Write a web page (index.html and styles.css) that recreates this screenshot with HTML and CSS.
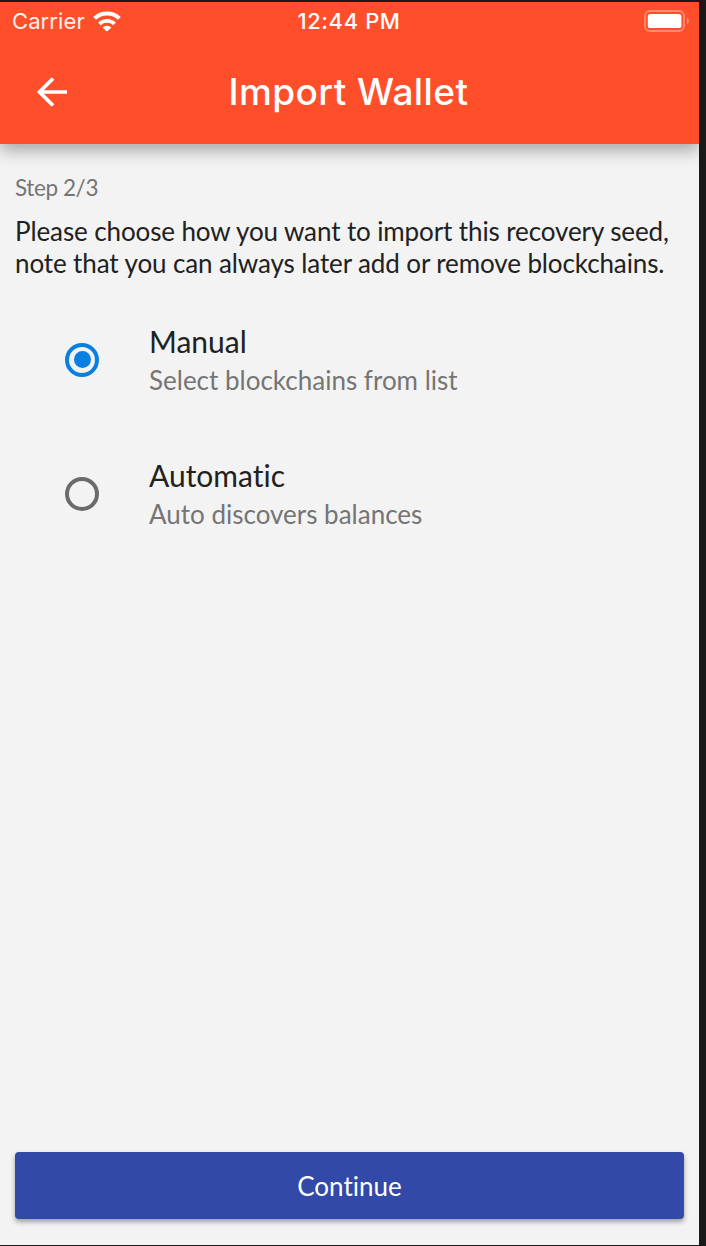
FILE: index.html
```html
<!DOCTYPE html>
<html lang="en">
<head>
  <meta charset="UTF-8">
  <title>Import Wallet</title>
  <meta name="viewport" content="width=device-width, initial-scale=1.0">

  <link rel="stylesheet" href="styles.css">
</head>
<body>

  <div class="screen">

    <header class="header">
      <div class="status-bar">
        <div class="carrier">
          <span class="carrier-name">Carrier</span>
          <svg class="wifi" width="28" height="21" viewBox="0 0 28 21">
            <path d="M14 20.6 L9.6 16.4 A6.2 5.4 0 0 1 18.4 16.4 Z" fill="#fff"/>
            <path d="M6.4 12.9 A10.8 10.4 0 0 1 21.6 12.9" fill="none" stroke="#fff" stroke-width="3.8"/>
            <path d="M1.6 7.4 A17.8 17.4 0 0 1 26.4 7.4" fill="none" stroke="#fff" stroke-width="4"/>
          </svg>
        </div>
        <span class="time">12:44 PM</span>
        <svg class="battery" width="46" height="22" viewBox="0 0 46 22">
          <rect x="1" y="1" width="39" height="20" rx="5" fill="none" stroke="#fff" stroke-opacity=".35" stroke-width="1.8"/>
          <rect x="3.8" y="4" width="33.6" height="14" rx="2.6" fill="#fff"/>
          <path d="M43 7.4 Q44.8 8.6 44.8 11 T43 14.6 Z" fill="#fff" fill-opacity=".45"/>
        </svg>
      </div>

      <div class="nav-bar">
        <button class="back-btn" aria-label="Back">
          <svg width="32" height="32" viewBox="0 0 32 32">
            <path d="M31 16 H3.5 M17 2.5 L3.5 16 L17 29.5" fill="none" stroke="#fff" stroke-width="3.7"/>
          </svg>
        </button>
        <h1>Import Wallet</h1>
      </div>
    </header>

    <main class="content">
      <p class="step">Step 2/3</p>
      <p class="intro">Please choose how you want to import this recovery seed,<br>note that you can always later add or remove blockchains.</p>

      <div class="options">
        <label class="option">
          <input type="radio" name="import-mode" checked>
          <span class="option-text">
            <span class="option-title">Manual</span>
            <span class="option-info">Select blockchains from list</span>
          </span>
        </label>

        <label class="option">
          <input type="radio" name="import-mode">
          <span class="option-text">
            <span class="option-title">Automatic</span>
            <span class="option-info">Auto discovers balances</span>
          </span>
        </label>
      </div>
    </main>

    <footer class="footer">
      <button class="continue-btn">Continue</button>
    </footer>

  </div>

</body>
</html>
```
FILE: styles.css
```css
* {
  box-sizing: border-box;
}

body {
  margin: 0;
  height: 1246px;
  padding: 2px 7px 1px 0;
  background-color: #191919;
  font-family: Lato, sans-serif;
  font-variant-ligatures: none;
  color: #212121;
}

h1, p {
  margin: 0;
}

.screen {
  display: flex;
  flex-direction: column;
  height: 1243px;
  background-color: #f3f3f3;
  overflow: hidden;
}

/* Header */
.header {
  height: 141.5px;
  background-color: #ff4e2a;
  color: white;
  font-family: Inter, sans-serif;
  box-shadow: 0 7px 15px rgba(0, 0, 0, 0.3);
}

.status-bar {
  display: grid;
  grid-template-columns: 1fr auto 1fr;
  align-items: center;
  height: 38px;
  padding: 0 9px 0 12px;
}

.carrier {
  display: flex;
  align-items: center;
  gap: 8px;
}

.carrier-name {
  font-size: 22px;
  letter-spacing: 0.1px;
  opacity: 0.92;
}

.time {
  padding-right: 4px;
  font-size: 22px;
  font-weight: 500;
  letter-spacing: 0.6px;
}

.battery {
  justify-self: end;
  margin-bottom: 1px;
}

.nav-bar {
  display: grid;
  grid-template-columns: 104px 1fr 106px;
  align-items: center;
  height: 103px;
}

.back-btn {
  display: flex;
  justify-content: center;
  padding: 0;
  border: none;
  background: none;
  cursor: pointer;
}

h1 {
  font-size: 37px;
  font-weight: 500;
  letter-spacing: 0.4px;
  text-align: center;
}

/* Content */
.content {
  flex: 1;
  padding: 30px 15px 0;
}

.step {
  font-size: 22.5px;
  line-height: 28px;
  letter-spacing: -0.4px;
  color: #757575;
}

.intro {
  margin-top: 13px;
  font-size: 26px;
  line-height: 32px;
  letter-spacing: -0.11px;
  white-space: nowrap;
}

.options {
  margin-top: 14px;
}

.option {
  display: flex;
  align-items: center;
  gap: 50px;
  height: 134px;
  padding-left: 50px;
  cursor: pointer;
}

.option input {
  appearance: none;
  display: grid;
  place-items: center;
  width: 34px;
  height: 34px;
  margin: 0;
  border: 4px solid #6b6b6b;
  border-radius: 50%;
}

.option input:checked {
  border-color: #0a7fe2;
}

.option input:checked::before {
  content: "";
  width: 17px;
  height: 17px;
  border-radius: 50%;
  background-color: #0a7fe2;
}

.option-text {
  display: flex;
  flex-direction: column;
}

.option-title {
  font-size: 30px;
  line-height: 41px;
}

.option-info {
  font-size: 26px;
  line-height: 36px;
  color: #757575;
}

/* Footer */
.footer {
  padding: 0 15px 26px;
}

.continue-btn {
  display: block;
  width: 100%;
  height: 67px;
  border: none;
  border-radius: 4px;
  background-color: #3249a8;
  color: white;
  font-family: inherit;
  font-variant-ligatures: none;
  font-size: 26px;
  box-shadow: 0 3px 5px rgba(0, 0, 0, 0.35);
  cursor: pointer;
}
```
